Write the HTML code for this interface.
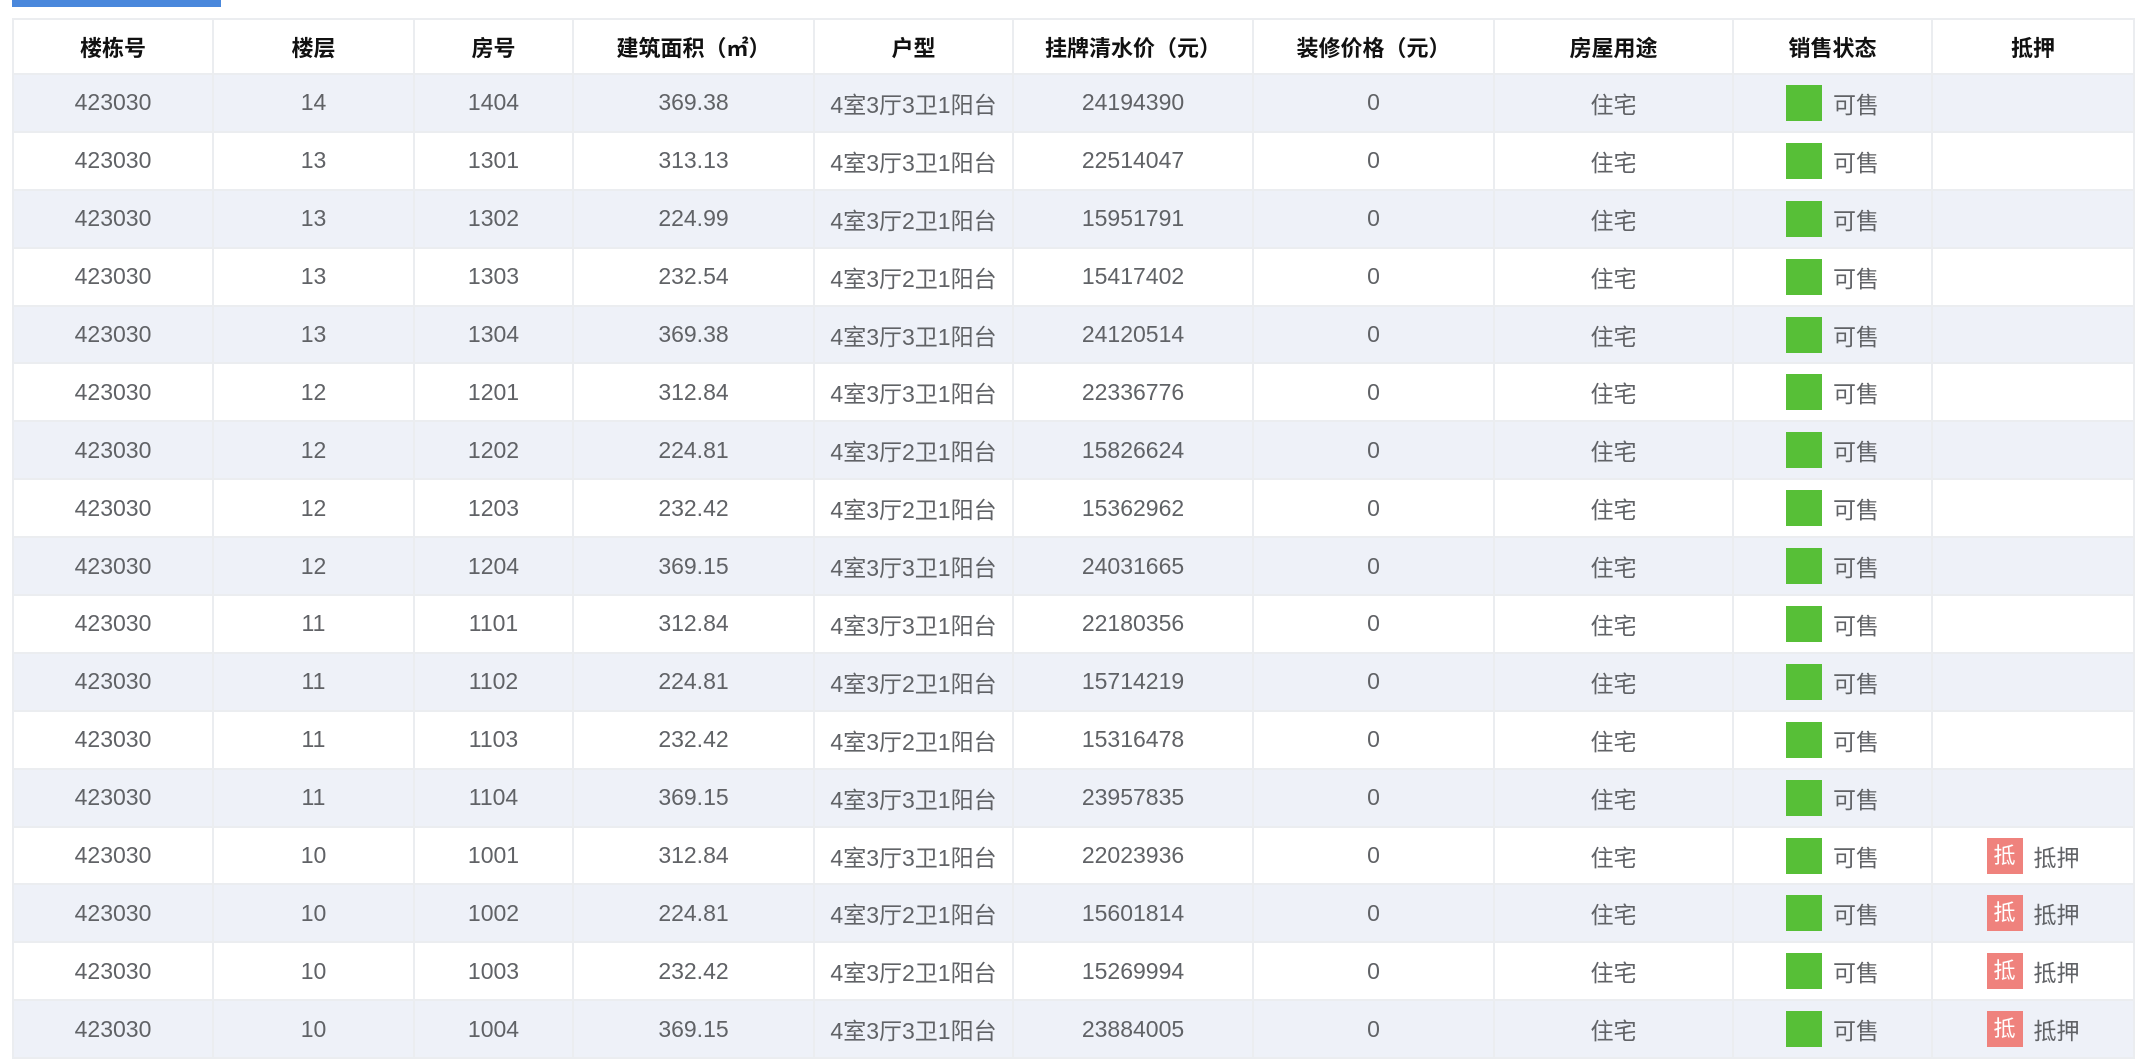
<!DOCTYPE html>
<html><head><meta charset="utf-8"><style>
html,body{margin:0;padding:0;background:#fff;width:2136px;height:1064px;overflow:hidden}
.bar{position:absolute;left:12px;top:0;width:209px;height:7px;background:#4a88dc}
table{position:absolute;left:12px;top:18px;border-collapse:collapse;table-layout:fixed;width:2122px;font-family:"Liberation Sans","Noto Sans CJK SC",sans-serif}
td,th{border:2px solid #ebedf0;text-align:center;padding:0;font-size:23px}
th{height:53px;font-weight:bold;color:#111;background:#fff;font-size:22px}
td{height:55.9px;color:#606266}
tr:nth-child(even) td{background:#eef1f8}
.g{display:inline-block;width:36px;height:36px;background:#57bf37;vertical-align:middle;margin-right:11px}
.r{display:inline-block;width:36px;height:36px;background:#ef827d;color:#fff;vertical-align:middle;margin-right:11px;line-height:36px;font-size:22px}
.s{vertical-align:middle}
</style></head><body>
<div class="bar"></div>
<table>
<colgroup><col style="width:200px"><col style="width:201px"><col style="width:159px"><col style="width:241px"><col style="width:199px"><col style="width:240px"><col style="width:241px"><col style="width:239px"><col style="width:199px"><col style="width:202px"></colgroup>
<tr><th>楼栋号</th><th>楼层</th><th>房号</th><th>建筑面积（㎡）</th><th>户型</th><th>挂牌清水价（元）</th><th>装修价格（元）</th><th>房屋用途</th><th>销售状态</th><th>抵押</th></tr>
<tr><td>423030</td><td>14</td><td>1404</td><td>369.38</td><td>4室3厅3卫1阳台</td><td>24194390</td><td>0</td><td>住宅</td><td><span class="g"></span><span class="s">可售</span></td><td></td></tr>
<tr><td>423030</td><td>13</td><td>1301</td><td>313.13</td><td>4室3厅3卫1阳台</td><td>22514047</td><td>0</td><td>住宅</td><td><span class="g"></span><span class="s">可售</span></td><td></td></tr>
<tr><td>423030</td><td>13</td><td>1302</td><td>224.99</td><td>4室3厅2卫1阳台</td><td>15951791</td><td>0</td><td>住宅</td><td><span class="g"></span><span class="s">可售</span></td><td></td></tr>
<tr><td>423030</td><td>13</td><td>1303</td><td>232.54</td><td>4室3厅2卫1阳台</td><td>15417402</td><td>0</td><td>住宅</td><td><span class="g"></span><span class="s">可售</span></td><td></td></tr>
<tr><td>423030</td><td>13</td><td>1304</td><td>369.38</td><td>4室3厅3卫1阳台</td><td>24120514</td><td>0</td><td>住宅</td><td><span class="g"></span><span class="s">可售</span></td><td></td></tr>
<tr><td>423030</td><td>12</td><td>1201</td><td>312.84</td><td>4室3厅3卫1阳台</td><td>22336776</td><td>0</td><td>住宅</td><td><span class="g"></span><span class="s">可售</span></td><td></td></tr>
<tr><td>423030</td><td>12</td><td>1202</td><td>224.81</td><td>4室3厅2卫1阳台</td><td>15826624</td><td>0</td><td>住宅</td><td><span class="g"></span><span class="s">可售</span></td><td></td></tr>
<tr><td>423030</td><td>12</td><td>1203</td><td>232.42</td><td>4室3厅2卫1阳台</td><td>15362962</td><td>0</td><td>住宅</td><td><span class="g"></span><span class="s">可售</span></td><td></td></tr>
<tr><td>423030</td><td>12</td><td>1204</td><td>369.15</td><td>4室3厅3卫1阳台</td><td>24031665</td><td>0</td><td>住宅</td><td><span class="g"></span><span class="s">可售</span></td><td></td></tr>
<tr><td>423030</td><td>11</td><td>1101</td><td>312.84</td><td>4室3厅3卫1阳台</td><td>22180356</td><td>0</td><td>住宅</td><td><span class="g"></span><span class="s">可售</span></td><td></td></tr>
<tr><td>423030</td><td>11</td><td>1102</td><td>224.81</td><td>4室3厅2卫1阳台</td><td>15714219</td><td>0</td><td>住宅</td><td><span class="g"></span><span class="s">可售</span></td><td></td></tr>
<tr><td>423030</td><td>11</td><td>1103</td><td>232.42</td><td>4室3厅2卫1阳台</td><td>15316478</td><td>0</td><td>住宅</td><td><span class="g"></span><span class="s">可售</span></td><td></td></tr>
<tr><td>423030</td><td>11</td><td>1104</td><td>369.15</td><td>4室3厅3卫1阳台</td><td>23957835</td><td>0</td><td>住宅</td><td><span class="g"></span><span class="s">可售</span></td><td></td></tr>
<tr><td>423030</td><td>10</td><td>1001</td><td>312.84</td><td>4室3厅3卫1阳台</td><td>22023936</td><td>0</td><td>住宅</td><td><span class="g"></span><span class="s">可售</span></td><td><span class="r">抵</span><span class="s">抵押</span></td></tr>
<tr><td>423030</td><td>10</td><td>1002</td><td>224.81</td><td>4室3厅2卫1阳台</td><td>15601814</td><td>0</td><td>住宅</td><td><span class="g"></span><span class="s">可售</span></td><td><span class="r">抵</span><span class="s">抵押</span></td></tr>
<tr><td>423030</td><td>10</td><td>1003</td><td>232.42</td><td>4室3厅2卫1阳台</td><td>15269994</td><td>0</td><td>住宅</td><td><span class="g"></span><span class="s">可售</span></td><td><span class="r">抵</span><span class="s">抵押</span></td></tr>
<tr><td>423030</td><td>10</td><td>1004</td><td>369.15</td><td>4室3厅3卫1阳台</td><td>23884005</td><td>0</td><td>住宅</td><td><span class="g"></span><span class="s">可售</span></td><td><span class="r">抵</span><span class="s">抵押</span></td></tr>
</table>
</body></html>
